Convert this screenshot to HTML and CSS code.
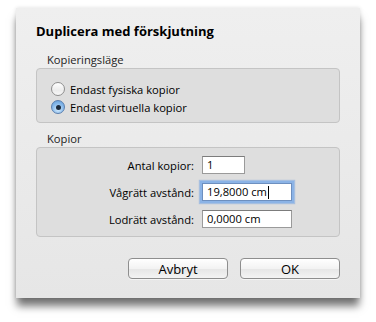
FILE: index.html
```html
<!DOCTYPE html>
<html lang="sv">
<head>
  <meta charset="UTF-8" />
  <title>Duplicera med förskjutning</title>
  <link rel="stylesheet" href="styles.css">
</head>
<body>
  <div class="sheet">
    <div class="title">Duplicera med förskjutning</div>

    <div class="group-label">Kopieringsläge</div>
    <div class="box mode-box">
      <div class="radio-row">
        <span class="radio"></span>
        <span>Endast fysiska kopior</span>
      </div>
      <div class="radio-row">
        <span class="radio checked"></span>
        <span>Endast virtuella kopior</span>
      </div>
    </div>

    <div class="group-label">Kopior</div>
    <div class="box copies-box">
      <div class="field-row">
        <span class="field-label">Antal kopior:</span>
        <span class="field short">1</span>
      </div>
      <div class="field-row">
        <span class="field-label">Vågrätt avstånd:</span>
        <span class="field focused">19,8000 cm<span class="caret"></span></span>
      </div>
      <div class="field-row">
        <span class="field-label">Lodrätt avstånd:</span>
        <span class="field">0,0000 cm</span>
      </div>
    </div>

    <div class="buttons">
      <button>Avbryt</button>
      <button>OK</button>
    </div>
  </div>
</body>
</html>
```

FILE: styles.css
```css
html {
  background: #fff;
}

body {
  margin: 0;
  padding: 8px 0 24px 16px;
  min-height: 290px;
  font-family: "Open Sans", sans-serif;
  font-size: 11.2px;
  color: #000;
}

.sheet {
  box-sizing: border-box;
  width: 344px;
  height: 290px;
  padding: 15px 20px 0 20px;
  background: linear-gradient(#efefef, #e6e6e6);
  box-shadow: 0 9px 8px -1px rgba(0, 0, 0, 0.55), 0 0 4px rgba(0, 0, 0, 0.12);
}

.title {
  font-weight: bold;
  font-size: 13px;
  line-height: 16px;
  height: 16px;
}

.group-label {
  padding-left: 11px;
  line-height: 14px;
  margin-top: 14px;
  margin-bottom: 1px;
  color: #222;
}

.box {
  box-sizing: border-box;
  background: #dedede;
  border: 1px solid #c4c4c4;
  border-radius: 4px;
}

.mode-box {
  height: 55px;
  padding: 11px 0 0 14px;
}

.mode-box + .group-label {
  margin-top: 9px;
}

.radio-row {
  display: flex;
  align-items: center;
  gap: 5px;
  height: 18px;
}

.radio {
  box-sizing: border-box;
  width: 14px;
  height: 14px;
  border-radius: 50%;
  border: 1px solid #8e8e8e;
  background: linear-gradient(#ffffff, #ececec 60%, #f8f8f8);
  display: flex;
  align-items: center;
  justify-content: center;
}

.radio.checked {
  border-color: #5a7fae;
  background: radial-gradient(circle at 50% 70%, #d6ecfd, #87b9ea 55%, #5d98d6);
}

.radio.checked::after {
  content: "";
  width: 5px;
  height: 5px;
  border-radius: 50%;
  background: #1b2a3c;
}

.copies-box {
  height: 90px;
  padding-top: 8px;
}

.field-row {
  display: flex;
  align-items: center;
  height: 18px;
  margin-bottom: 9px;
}

.field-label {
  width: 157px;
  text-align: right;
  padding-right: 8px;
}

.field {
  box-sizing: border-box;
  width: 90px;
  height: 18px;
  line-height: 16px;
  padding-left: 4px;
  background: #fff;
  border: 1px solid #9a9a9a;
  border-top-color: #7c7c7c;
  display: flex;
  align-items: center;
}

.field.short {
  width: 43px;
}

.field.focused {
  box-shadow: 0 0 0 2px #8bb3e6, 0 0 1px 3px rgba(110, 160, 225, 0.5);
  border-color: #6d8fbf;
}

.caret {
  display: inline-block;
  width: 1px;
  height: 13px;
  background: #000;
  margin-left: 1px;
}

.buttons {
  display: flex;
  justify-content: flex-end;
  gap: 12px;
  margin-top: 21px;
}

.buttons button {
  width: 100px;
  height: 21px;
  padding: 0;
  font-family: "Open Sans", sans-serif;
  font-size: 13px;
  color: #000;
  border: 1px solid #8e8e8e;
  border-radius: 4px;
  background: linear-gradient(#ffffff, #f3f3f3 50%, #e6e6e6 51%, #f4f4f4);
  box-shadow: 0 1px 0 rgba(255, 255, 255, 0.6);
}
```
